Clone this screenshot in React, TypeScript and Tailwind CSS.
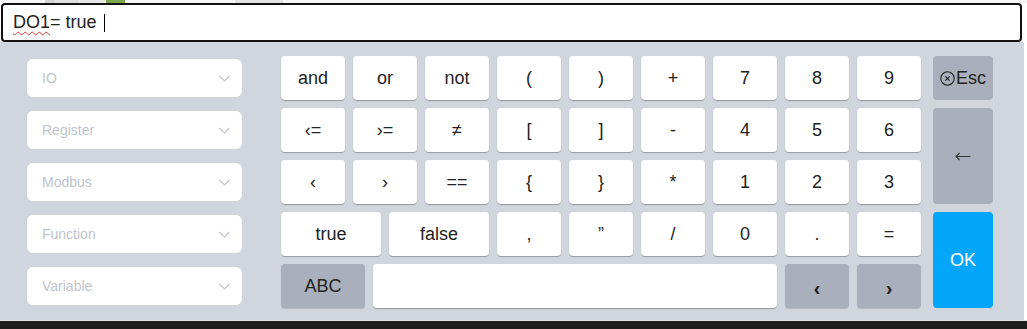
const SELECTS = ["IO", "Register", "Modbus", "Function", "Variable"];

const GRID_ROWS = [
  ["and", "or", "not", "(", ")", "+", "7", "8", "9"],
  ["‹=", "›=", "≠", "[", "]", "-", "4", "5", "6"],
  ["‹", "›", "==", "{", "}", "*", "1", "2", "3"],
];

const ROW4 = [",", "”", "/", "0", ".", "="];

function Key({ label, className = "w-[64px]" }: { label: string; className?: string }) {
  return (
    <div
      className={`${className} h-[44px] rounded-[4px] bg-white shadow-[0_1px_1px_rgba(0,0,0,0.28)] flex items-center justify-center text-[18px] text-[#222]`}
    >
      {label}
    </div>
  );
}

function GrayKey({ label, className = "w-[64px]", bold }: { label: string; className?: string; bold?: boolean }) {
  return (
    <div
      className={`${className} h-[44px] rounded-[4px] bg-[#a9b0bc] shadow-[0_1px_1px_rgba(0,0,0,0.15)] flex items-center justify-center text-[#222] ${
        bold ? "text-[20px] font-bold pt-[3px]" : "text-[18px]"
      }`}
    >
      {label}
    </div>
  );
}

export default function App() {
  return (
    <div className="w-[1027px] h-[329px] bg-white overflow-hidden font-['Liberation_Sans',Arial,sans-serif]">
      {/* tab strip peeking above the input */}
      <div className="h-[3px] flex bg-[#f6f6f6]">
        <div className="w-[45px]" />
        <div className="w-[10px] bg-[#d6d6d6]" />
        <div className="w-[24px] bg-[#e0e0e0]" />
        <div className="w-[27px] bg-[#e8e8e8]" />
        <div className="w-[19px] bg-[#7aa84a]" />
        <div className="w-[110px]" />
        <div className="w-[48px] bg-[#e4e4e4]" />
      </div>

      <div className="ml-[1px] w-[1021px] h-[39px] border-2 border-[#111] rounded-[4px] flex items-center pl-[10px] text-[18px] text-[#222]">
        <span className="underline decoration-wavy decoration-[#e03030] decoration-1 underline-offset-[3px]">DO1</span>
        <span className="whitespace-pre">= true </span>
        <span className="ml-[2px] w-px h-[18px] bg-black" />
      </div>

      <div className="w-[1024px] h-[278px] bg-[#d1d5dd] flex pt-[14px]">
        <div className="ml-[27px] mt-[3px] w-[215px] flex flex-col gap-[14px]">
          {SELECTS.map((s) => (
            <div key={s} className="h-[38px] rounded-[6px] bg-white flex items-center justify-between pl-[15px] pr-[12px]">
              <span className="text-[14px] text-[#c0c4cc]">{s}</span>
              <svg width="11" height="7" viewBox="0 0 11 7">
                <path d="M0.5 1 L5.5 6 L10.5 1" fill="none" stroke="#c0c4cc" strokeWidth="1.1" />
              </svg>
            </div>
          ))}
        </div>

        <div className="ml-[39px] flex flex-col gap-[8px]">
          {GRID_ROWS.map((row, i) => (
            <div key={i} className="flex gap-[8px]">
              {row.map((k) => (
                <Key key={k} label={k} />
              ))}
            </div>
          ))}
          <div className="flex gap-[8px]">
            <Key label="true" className="w-[100px]" />
            <Key label="false" className="w-[100px]" />
            {ROW4.map((k) => (
              <Key key={k} label={k} />
            ))}
          </div>
          <div className="flex gap-[8px]">
            <GrayKey label="ABC" className="w-[84px]" />
            <div className="w-[404px] h-[44px] rounded-[4px] bg-white shadow-[0_1px_1px_rgba(0,0,0,0.28)]" />
            <GrayKey label="‹" bold />
            <GrayKey label="›" bold />
          </div>
        </div>

        <div className="ml-[12px] w-[60px] flex flex-col gap-[8px]">
          <div className="h-[44px] rounded-[4px] bg-[#a9b0bc] flex items-center justify-center text-[18px] text-[#222]">
            <svg width="15" height="15" viewBox="0 0 15 15" className="mr-[1px]">
              <circle cx="7.5" cy="7.5" r="6.7" fill="none" stroke="#222" strokeWidth="1.1" />
              <path d="M5.4 5.4 L9.6 9.6 M9.6 5.4 L5.4 9.6" stroke="#222" strokeWidth="1.1" />
            </svg>
            <span>Esc</span>
          </div>
          <div className="h-[96px] rounded-[4px] bg-[#a9b0bc] flex items-center justify-center">
            <svg width="16" height="9" viewBox="0 0 16 9">
              <path d="M1 4.5 H15.5 M4.5 1 L1 4.5 L4.5 8" fill="none" stroke="#333" strokeWidth="1.1" />
            </svg>
          </div>
          <div className="h-[96px] rounded-[4px] bg-[#04a6fb] flex items-center justify-center text-[18px] text-white">
            OK
          </div>
        </div>
      </div>
      <div className="h-px bg-[#e4e6ea]" />
      <div className="h-[8px] bg-[#1e1e1e]" />
    </div>
  );
}
